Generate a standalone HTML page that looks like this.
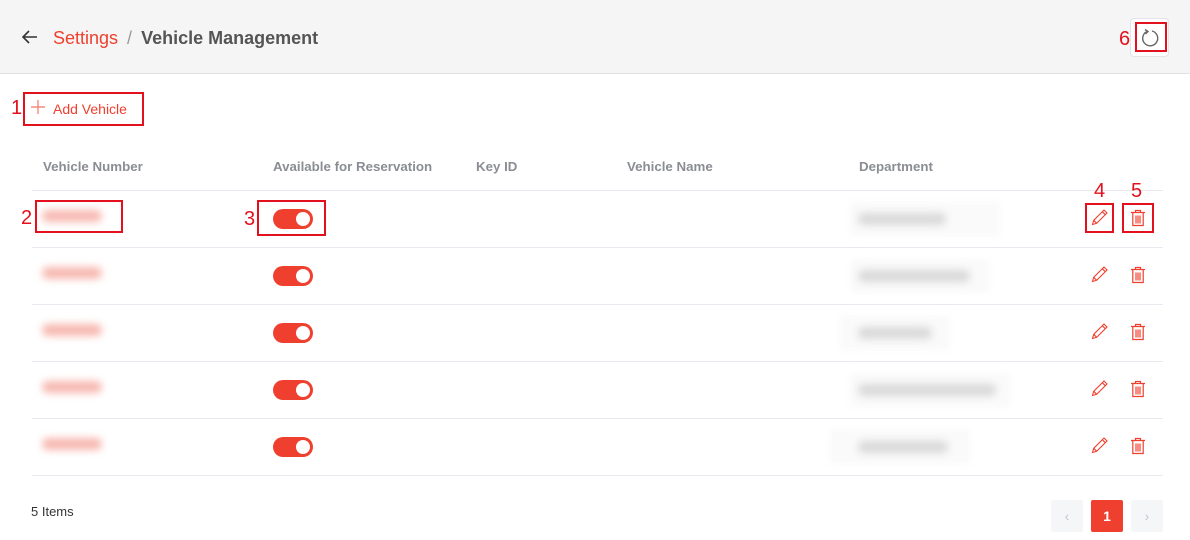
<!DOCTYPE html><html><head><style>
body{margin:0;width:1190px;height:540px;background:#fff;font-family:"Liberation Sans",sans-serif;position:relative;overflow:hidden}
.a{position:absolute}
.hdr{left:0;top:0;width:1190px;height:73px;background:#f5f5f5;border-bottom:1px solid #e2e2e6}
.box{position:absolute;border:2.5px solid #e3101d;box-sizing:border-box}
.num{position:absolute;color:#e3101d;font-size:20px}
.th{top:159px;font-size:13.3px;color:#8a8d93;font-weight:bold}
.line{left:32px;width:1131px;height:1px;background:#e9e9ef}
.tog{width:40px;height:20px;border-radius:10px;background:#ef402f}
.tog:after{content:"";position:absolute;right:3px;top:3px;width:14px;height:14px;border-radius:50%;background:#fff}
.blur{filter:blur(4px);height:12px;border-radius:6px}
.bg{position:absolute;background:#fafafa;filter:blur(3px)}
</style></head><body>
<div class="a hdr"></div>
<svg class="a" style="left:22px;top:30px" width="16" height="14"><path d="M15 7H2M7 1L1 7l6 6" stroke="#333" stroke-width="1.6" fill="none"/></svg>
<div class="a" style="left:53px;top:28px;font-size:18px;color:#ef402f">Settings <span style="color:#999;margin:0 4px">/</span> <b style="color:#555">Vehicle Management</b></div>
<div class="a" style="left:1130px;top:18px;width:39px;height:39px;background:#fff;border:1px solid #e3e3e8;border-radius:4px;box-sizing:border-box"></div>
<svg class="a" style="left:1140px;top:28px" width="20" height="20"><path d="M7 3.5A7.5 7.5 0 1 0 12 3" stroke="#666" stroke-width="1.4" fill="none"/><path d="M5 1.5l3 2-2.5 2.5" stroke="#666" stroke-width="1.4" fill="none"/></svg>
<div class="box" style="left:1135px;top:22px;width:32px;height:30px"></div><div class="num" style="left:1119px;top:28px">6</div>
<svg class="a" style="left:31px;top:100px" width="14" height="14"><path d="M7 0v14M0 7h14" stroke="#f28b80" stroke-width="1.4"/></svg>
<div class="a" style="left:53px;top:101px;font-size:14px;color:#ef402f">Add Vehicle</div>
<div class="box" style="left:23px;top:92px;width:121px;height:34px"></div><div class="num" style="left:11px;top:97px">1</div>
<div class="a th" style="left:43px">Vehicle Number</div>
<div class="a th" style="left:273px">Available for Reservation</div>
<div class="a th" style="left:476px">Key ID</div>
<div class="a th" style="left:627px">Vehicle Name</div>
<div class="a th" style="left:859px">Department</div>
<div class="a line" style="top:190px"></div><div class="a line" style="top:247px"></div><div class="a line" style="top:304px"></div><div class="a line" style="top:361px"></div><div class="a line" style="top:418px"></div><div class="a line" style="top:475px"></div>
<div class="bg" style="left:850px;top:202px;width:150px;height:34px"></div>
<div class="bg" style="left:850px;top:259px;width:140px;height:34px"></div>
<div class="bg" style="left:840px;top:316px;width:110px;height:34px"></div>
<div class="bg" style="left:850px;top:373px;width:160px;height:34px"></div>
<div class="bg" style="left:830px;top:430px;width:140px;height:34px"></div>
<div class="a blur" style="left:42px;top:210px;width:60px;background:#f7b8b0"></div>
<div class="a blur" style="left:42px;top:267px;width:60px;background:#f7b8b0"></div>
<div class="a blur" style="left:42px;top:324px;width:60px;background:#f7b8b0"></div>
<div class="a blur" style="left:42px;top:381px;width:60px;background:#f7b8b0"></div>
<div class="a blur" style="left:42px;top:438px;width:60px;background:#f7b8b0"></div>
<div class="a blur" style="left:858px;top:213px;width:88px;background:#d9d9d9"></div>
<div class="a blur" style="left:858px;top:270px;width:112px;background:#d9d9d9"></div>
<div class="a blur" style="left:858px;top:327px;width:74px;background:#d9d9d9"></div>
<div class="a blur" style="left:858px;top:384px;width:138px;background:#d9d9d9"></div>
<div class="a blur" style="left:858px;top:441px;width:90px;background:#d9d9d9"></div>
<div class="a tog" style="left:273px;top:209px"></div>
<div class="a tog" style="left:273px;top:266px"></div>
<div class="a tog" style="left:273px;top:323px"></div>
<div class="a tog" style="left:273px;top:380px"></div>
<div class="a tog" style="left:273px;top:437px"></div>
<div class="box" style="left:35px;top:200px;width:88px;height:33px"></div><div class="num" style="left:21px;top:207px">2</div>
<div class="box" style="left:257px;top:200px;width:69px;height:36px"></div><div class="num" style="left:244px;top:208px">3</div>
<svg width="0" height="0" style="position:absolute"><defs>
<g id="pen"><path d="M1.5 16.5l1.2-4.2L13 2l3 3L5.7 15.3z M11.3 3.7l3 3 M2.7 12.3l3 3" stroke="#ef402f" stroke-width="1.1" fill="none"/></g>
<g id="bin"><path d="M1 3.5h14M5.5 3.5V1.5h5v2M2.8 3.5v13h10.4v-13M6 6.5v8M8 6.5v8M10 6.5v8" stroke="#ef402f" stroke-width="1.2" fill="none"/></g></defs></svg>
<svg class="a" style="left:1091px;top:208px" width="18" height="18"><use href="#pen"/></svg>
<svg class="a" style="left:1130px;top:209px" width="16" height="18"><use href="#bin"/></svg>
<svg class="a" style="left:1091px;top:265px" width="18" height="18"><use href="#pen"/></svg>
<svg class="a" style="left:1130px;top:266px" width="16" height="18"><use href="#bin"/></svg>
<svg class="a" style="left:1091px;top:322px" width="18" height="18"><use href="#pen"/></svg>
<svg class="a" style="left:1130px;top:323px" width="16" height="18"><use href="#bin"/></svg>
<svg class="a" style="left:1091px;top:379px" width="18" height="18"><use href="#pen"/></svg>
<svg class="a" style="left:1130px;top:380px" width="16" height="18"><use href="#bin"/></svg>
<svg class="a" style="left:1091px;top:436px" width="18" height="18"><use href="#pen"/></svg>
<svg class="a" style="left:1130px;top:437px" width="16" height="18"><use href="#bin"/></svg>
<div class="box" style="left:1085px;top:203px;width:29px;height:30px"></div><div class="num" style="left:1094px;top:180px">4</div>
<div class="box" style="left:1122px;top:203px;width:32px;height:30px"></div><div class="num" style="left:1131px;top:180px">5</div>
<div class="a" style="left:31px;top:504px;font-size:13px;color:#333">5 Items</div>
<div class="a" style="left:1051px;top:500px;width:32px;height:32px;background:#f5f6f8;border-radius:2px;color:#c5c5cc;text-align:center;line-height:32px;font-size:14px">‹</div>
<div class="a" style="left:1091px;top:500px;width:32px;height:32px;background:#ef402f;border-radius:2px;color:#fff;text-align:center;line-height:32px;font-size:14px;font-weight:bold">1</div>
<div class="a" style="left:1131px;top:500px;width:32px;height:32px;background:#f5f6f8;border-radius:2px;color:#c5c5cc;text-align:center;line-height:32px;font-size:14px">›</div>
</body></html>
